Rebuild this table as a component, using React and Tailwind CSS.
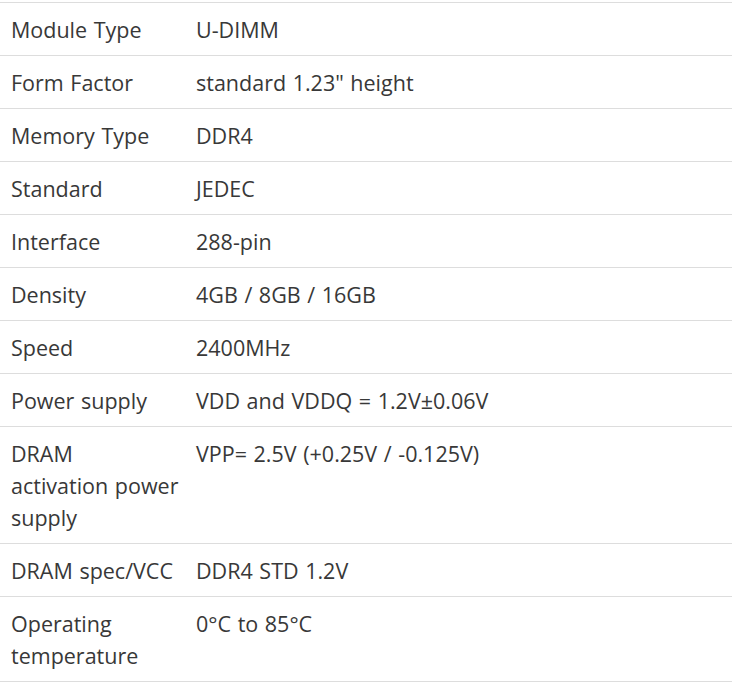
import React from 'react';

const rows = [
  [['Module Type'], 'U-DIMM'],
  [['Form Factor'], 'standard 1.23" height'],
  [['Memory Type'], 'DDR4'],
  [['Standard'], 'JEDEC'],
  [['Interface'], '288-pin'],
  [['Density'], '4GB / 8GB / 16GB'],
  [['Speed'], '2400MHz'],
  [['Power supply'], 'VDD and VDDQ = 1.2V±0.06V'],
  [['DRAM', 'activation power', 'supply'], 'VPP= 2.5V (+0.25V / -0.125V)'],
  [['DRAM spec/VCC'], 'DDR4 STD 1.2V'],
  [['Operating', 'temperature'], '0°C to 85°C'],
];

export default function App() {
  return (
    <div className="w-[732px] h-[683px] bg-white pt-[2px] text-[#383838] text-[21.5px] leading-[32px] [word-spacing:1px]" style={{ fontFamily: '"Open Sans", sans-serif' }}>
      <div className="border-t border-[#ddd]">
        {rows.map(([k, v], i) => (
          <div key={i} className="grid grid-cols-[186px_1fr] border-b border-[#ddd]">
            <div className="pl-[11px] pt-[11px] pb-[9px] whitespace-nowrap">
              {k.map((line, j) => (
                <div key={j}>{line}</div>
              ))}
            </div>
            <div className="px-[10px] pt-[11px] pb-[9px]">{v}</div>
          </div>
        ))}
      </div>
    </div>
  );
}
